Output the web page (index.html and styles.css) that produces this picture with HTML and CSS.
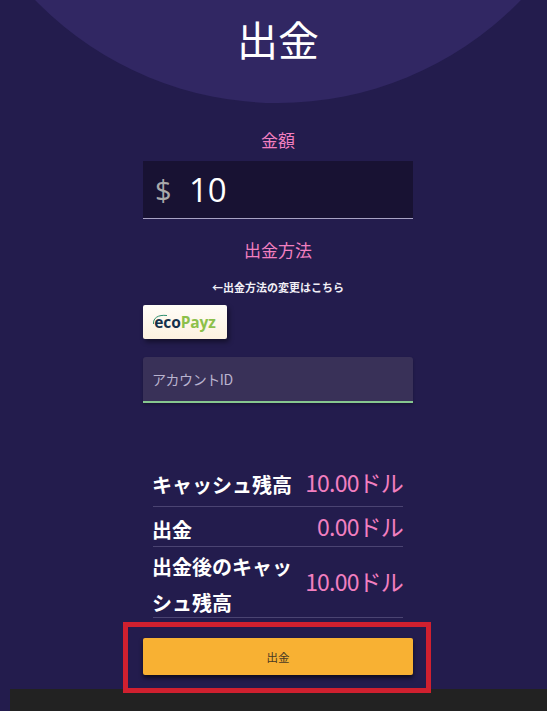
FILE: index.html
```html
<!DOCTYPE html>
<html lang="ja">
<head>
<meta charset="utf-8">
<title>出金</title>
<link rel="stylesheet" href="styles.css">
</head>
<body>
<div class="page">
  <div class="circle"></div>
  <main class="content">
    <h1 class="title">出金</h1>
    <label class="label first">金額</label>
    <div class="amount"><span class="cur">$</span><span class="val">10</span></div>
    <label class="label second">出金方法</label>
    <p class="hint">←出金方法の変更はこちら</p>
    <div class="method">
      <span class="logo">
        <svg class="arc" width="16" height="16" viewBox="0 0 16 16"><path d="M1.5 11C1 5 6 1.5 15 2.5" fill="none" stroke="#2e8f6f" stroke-width="1"/></svg>
        <span class="eco">eco</span><span class="payz">Payz</span>
      </span>
    </div>
    <div class="field">アカウントID</div>
    <div class="rows">
      <div class="row r1"><span class="k">キャッシュ残高</span><span class="v">10.00ドル</span></div>
      <div class="row r2"><span class="k">出金</span><span class="v">0.00ドル</span></div>
      <div class="row r3"><span class="k">出金後のキャッシュ残高</span><span class="v">10.00ドル</span></div>
    </div>
    <button class="submit" type="button">出金</button>
  </main>
  <div class="footer"></div>
  <div class="annotation"></div>
</div>
</body>
</html>
```

FILE: styles.css
```css
* { box-sizing: border-box; }
html, body { margin: 0; padding: 0; }
body {
  background: #231c4d;
  font-family: "Noto Sans CJK JP", "Noto Sans", sans-serif;
  overflow: hidden;
}
.page {
  position: relative;
  width: 547px;
  height: 711px;
  overflow: hidden;
  padding-left: 10px;
}
.circle {
  position: absolute;
  left: -60px;
  top: -573px;
  width: 676px;
  height: 676px;
  border-radius: 50%;
  background: #312763;
}
.content {
  position: relative;
  width: 270px;
  margin-left: 133px;
}
.title {
  margin: 0;
  height: 83px;
  padding-top: 8px;
  text-align: center;
  font-size: 41px;
  line-height: 60px;
  font-weight: 400;
  color: #fff;
}
.label {
  display: block;
  text-align: center;
  color: #f27fc0;
  font-weight: 400;
}
.first { margin-top: 44px; font-size: 17px; line-height: 25px; height: 34px; }
.second { margin-top: 18px; font-size: 17px; line-height: 25px; }
.amount {
  height: 58px;
  background: #181233;
  border-bottom: 1px solid #a8a2c4;
  display: flex;
  align-items: center;
  padding-left: 12px;
  font-family: "Open Sans", sans-serif;
}
.cur { color: #a9a9ab; font-size: 29px; width: 34px; }
.val { color: #fff; font-size: 33px; }
.hint {
  margin: 17px 0 0;
  text-align: center;
  font-size: 11px;
  line-height: 16px;
  font-weight: 700;
  color: #f1eff6;
}
.method {
  margin-top: 10px;
  width: 84px;
  height: 34px;
  border-radius: 2px;
  background: linear-gradient(#fffdf8, #fdf1df);
  box-shadow: 2px 3px 5px rgba(0, 0, 0, .45);
  display: flex;
  align-items: center;
  justify-content: center;
}
.logo {
  position: relative;
  font-family: "Open Sans", sans-serif;
  font-weight: 700;
  font-size: 15.5px;
  letter-spacing: -.1px;
  line-height: 20px;
}
.arc { position: absolute; left: -2px; top: 1px; }
.eco { color: #14304a; }
.payz { color: #8cc04a; }
.field {
  margin-top: 18px;
  height: 46px;
  padding: 0 9px;
  background: #393158;
  border-radius: 3px 3px 0 0;
  border-bottom: 2px solid #86c78f;
  box-shadow: 0 2px 3px rgba(0, 0, 0, .25);
  display: flex;
  align-items: center;
  color: #b9b3cf;
  font-size: 14px;
  letter-spacing: -.45px;
}
.rows { margin: 40px 10px 0; }
.row {
  display: flex;
  justify-content: space-between;
  align-items: flex-end;
  border-bottom: 1px solid #4b4472;
}
.r1 { height: 64px; }
.r1 .k { margin-bottom: 3px; }
.r1 .v { margin-bottom: 8px; }
.r2 { height: 40px; }
.r2 .k { margin-bottom: -2px; }
.r2 .v { margin-bottom: 4px; }
.r3 { height: 71px; }
.r3 .k { margin-bottom: -4px; }
.r3 .v { margin-bottom: 20px; }
.k {
  width: 144px;
  flex: none;
  margin-left: -1px;
  color: #fff;
  font-size: 20px;
  line-height: 36px;
  font-weight: 700;
}
.v {
  color: #f27fc0;
  font-size: 23px;
  line-height: 32px;
  white-space: nowrap;
  letter-spacing: -.8px;
}
.submit {
  display: block;
  width: 100%;
  height: 37px;
  margin-top: 20px;
  border: 0;
  border-radius: 2px;
  background: #f8b133;
  box-shadow: 0 3px 4px rgba(0, 0, 0, .6);
  color: #4a3a24;
  font-family: inherit;
  font-size: 11.5px;
}
.footer {
  position: absolute;
  left: 10px;
  right: 0;
  top: 689px;
  height: 22px;
  background: #222222;
}
.annotation {
  position: absolute;
  left: 123px;
  top: 622px;
  width: 308px;
  height: 71px;
  border: 5px solid #d0202f;
}
```
